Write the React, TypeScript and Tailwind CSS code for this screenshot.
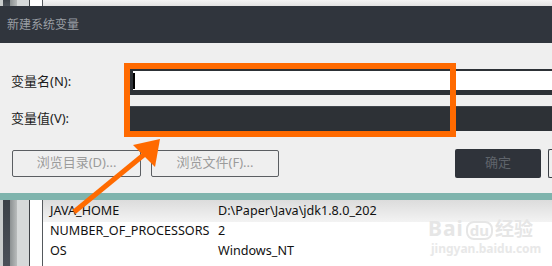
const font = { fontFamily: '"Noto Sans", "Noto Sans CJK SC", sans-serif' };

const rows = [
  { name: "JAVA_HOME", value: "D:\\Paper\\Java\\jdk1.8.0_202" },
  { name: "NUMBER_OF_PROCESSORS", value: "2" },
  { name: "OS", value: "Windows_NT" },
];

const LeftStrip = ({ tall }: { tall?: boolean }) => (
  <div className={`flex shrink-0 ${tall ? "h-full" : "h-[6px]"}`}>
    <div className="w-[3px] bg-[#c9cdcd]" />
    <div className="w-[7px] bg-gradient-to-b from-[#3b4148] to-[#4a5058]" />
    <div className="w-[7px] bg-gradient-to-r from-[#8c9192] to-[#b9bcbc]" />
    <div className="w-[12px] bg-[#d6d9d9]" />
    <div className="w-px bg-[#3e4246]" />
    <div className="w-[12px] bg-white" />
    <div className="w-px bg-[#55595d]" />
  </div>
);

export default function App() {
  return (
    <div className="relative w-[552px] h-[266px] overflow-hidden bg-white" style={font}>
      {/* strip of the window behind */}
      <div className="flex h-[6px]">
        <LeftStrip />
        <div className="flex-1 bg-gradient-to-b from-[#f4f4f4] to-[#e2e2e2]" />
      </div>

      {/* title bar */}
      <div className="h-[37px] bg-[#30353d] flex items-center pl-[7px]">
        <span className="text-[12px] text-[#9a9ea4]">新建系统变量</span>
      </div>

      {/* dialog body */}
      <div className="h-[150px] bg-[#efefef] flex flex-col">
        <div className="flex items-center mt-[26px] h-[26px]">
          <span className="w-[130px] pl-[11px] text-[13px] text-[#1c1c1c]">变量名(N):</span>
          <div className="flex-1 h-[26px] border-t-2 border-b-[5px] border-l-[3px] border-[#2d3136] bg-white flex items-center">
            <div className="w-[2px] h-[16px] bg-black" />
          </div>
        </div>
        <div className="flex items-center mt-[11px] h-[25px]">
          <span className="w-[130px] pl-[11px] text-[13px] text-[#1c1c1c]">变量值(V):</span>
          <div className="flex-1 h-[25px] bg-[#2d3136] border-t border-[#40464d]" />
        </div>
        <div className="flex items-center mt-[18px] h-[28px]">
          <button className="ml-[12px] w-[129px] h-[27px] border border-[#5b5e62] rounded-[2px] text-[13px] text-[#9b9b9b]">浏览目录(D)...</button>
          <button className="ml-[10px] w-[128px] h-[27px] border border-[#5b5e62] rounded-[2px] text-[13px] text-[#9b9b9b]">浏览文件(F)...</button>
          <div className="flex-1" />
          <button className="w-[86px] h-[29px] bg-[#2f333a] rounded-[2px] text-[13px] text-[#5f646b]">确定</button>
          <div className="ml-[7px] w-[4px] h-[29px] border border-r-0 border-[#3a3e44] rounded-l-[2px]" />
        </div>
      </div>

      <div className="h-[7px] bg-[#7fb4ad]" />

      {/* environment variable list */}
      <div className="flex h-[66px]">
        <LeftStrip tall />
        <div className="flex-1 relative bg-white">
          <div className="absolute inset-x-0 top-0 h-[22px] bg-gradient-to-b from-[#dcdcdc] to-[#f3f3f3]" />
          <div className="relative flex flex-col pt-[1px]">
            {rows.map((r) => (
              <div key={r.name} className="flex items-center h-[20px] text-[12.6px] text-[#111]">
                <span className="w-[175px] pl-[7px]">{r.name}</span>
                <span>{r.value}</span>
              </div>
            ))}
          </div>
          {/* watermark */}
          <div className="absolute left-[385px] top-[18px] flex items-baseline gap-[2px] text-[#e6e6e6] font-bold">
            <span className="text-[21px] leading-none tracking-[1px]">Bai</span>
            <span className="text-[15px] leading-none border-2 border-[#e6e6e6] rounded-[8px] px-[2px]">du</span>
            <span className="text-[19px] leading-none">经验</span>
          </div>
          <div className="absolute left-[388px] top-[40px] text-[12px] text-[#e8e8e8] font-bold">jingyan.baidu.com</div>
        </div>
      </div>

      {/* annotation */}
      <div className="absolute left-[124px] top-[63px] w-[332px] h-[74px] border-[6px] border-[#ff6a00]" />
      <svg className="absolute left-0 top-0" width="552" height="266">
        <line x1="74" y1="212" x2="146" y2="153" stroke="#ff6a00" strokeWidth="5" />
        <polygon points="160,139 133,145 155,167" fill="#ff6a00" />
      </svg>
    </div>
  );
}
